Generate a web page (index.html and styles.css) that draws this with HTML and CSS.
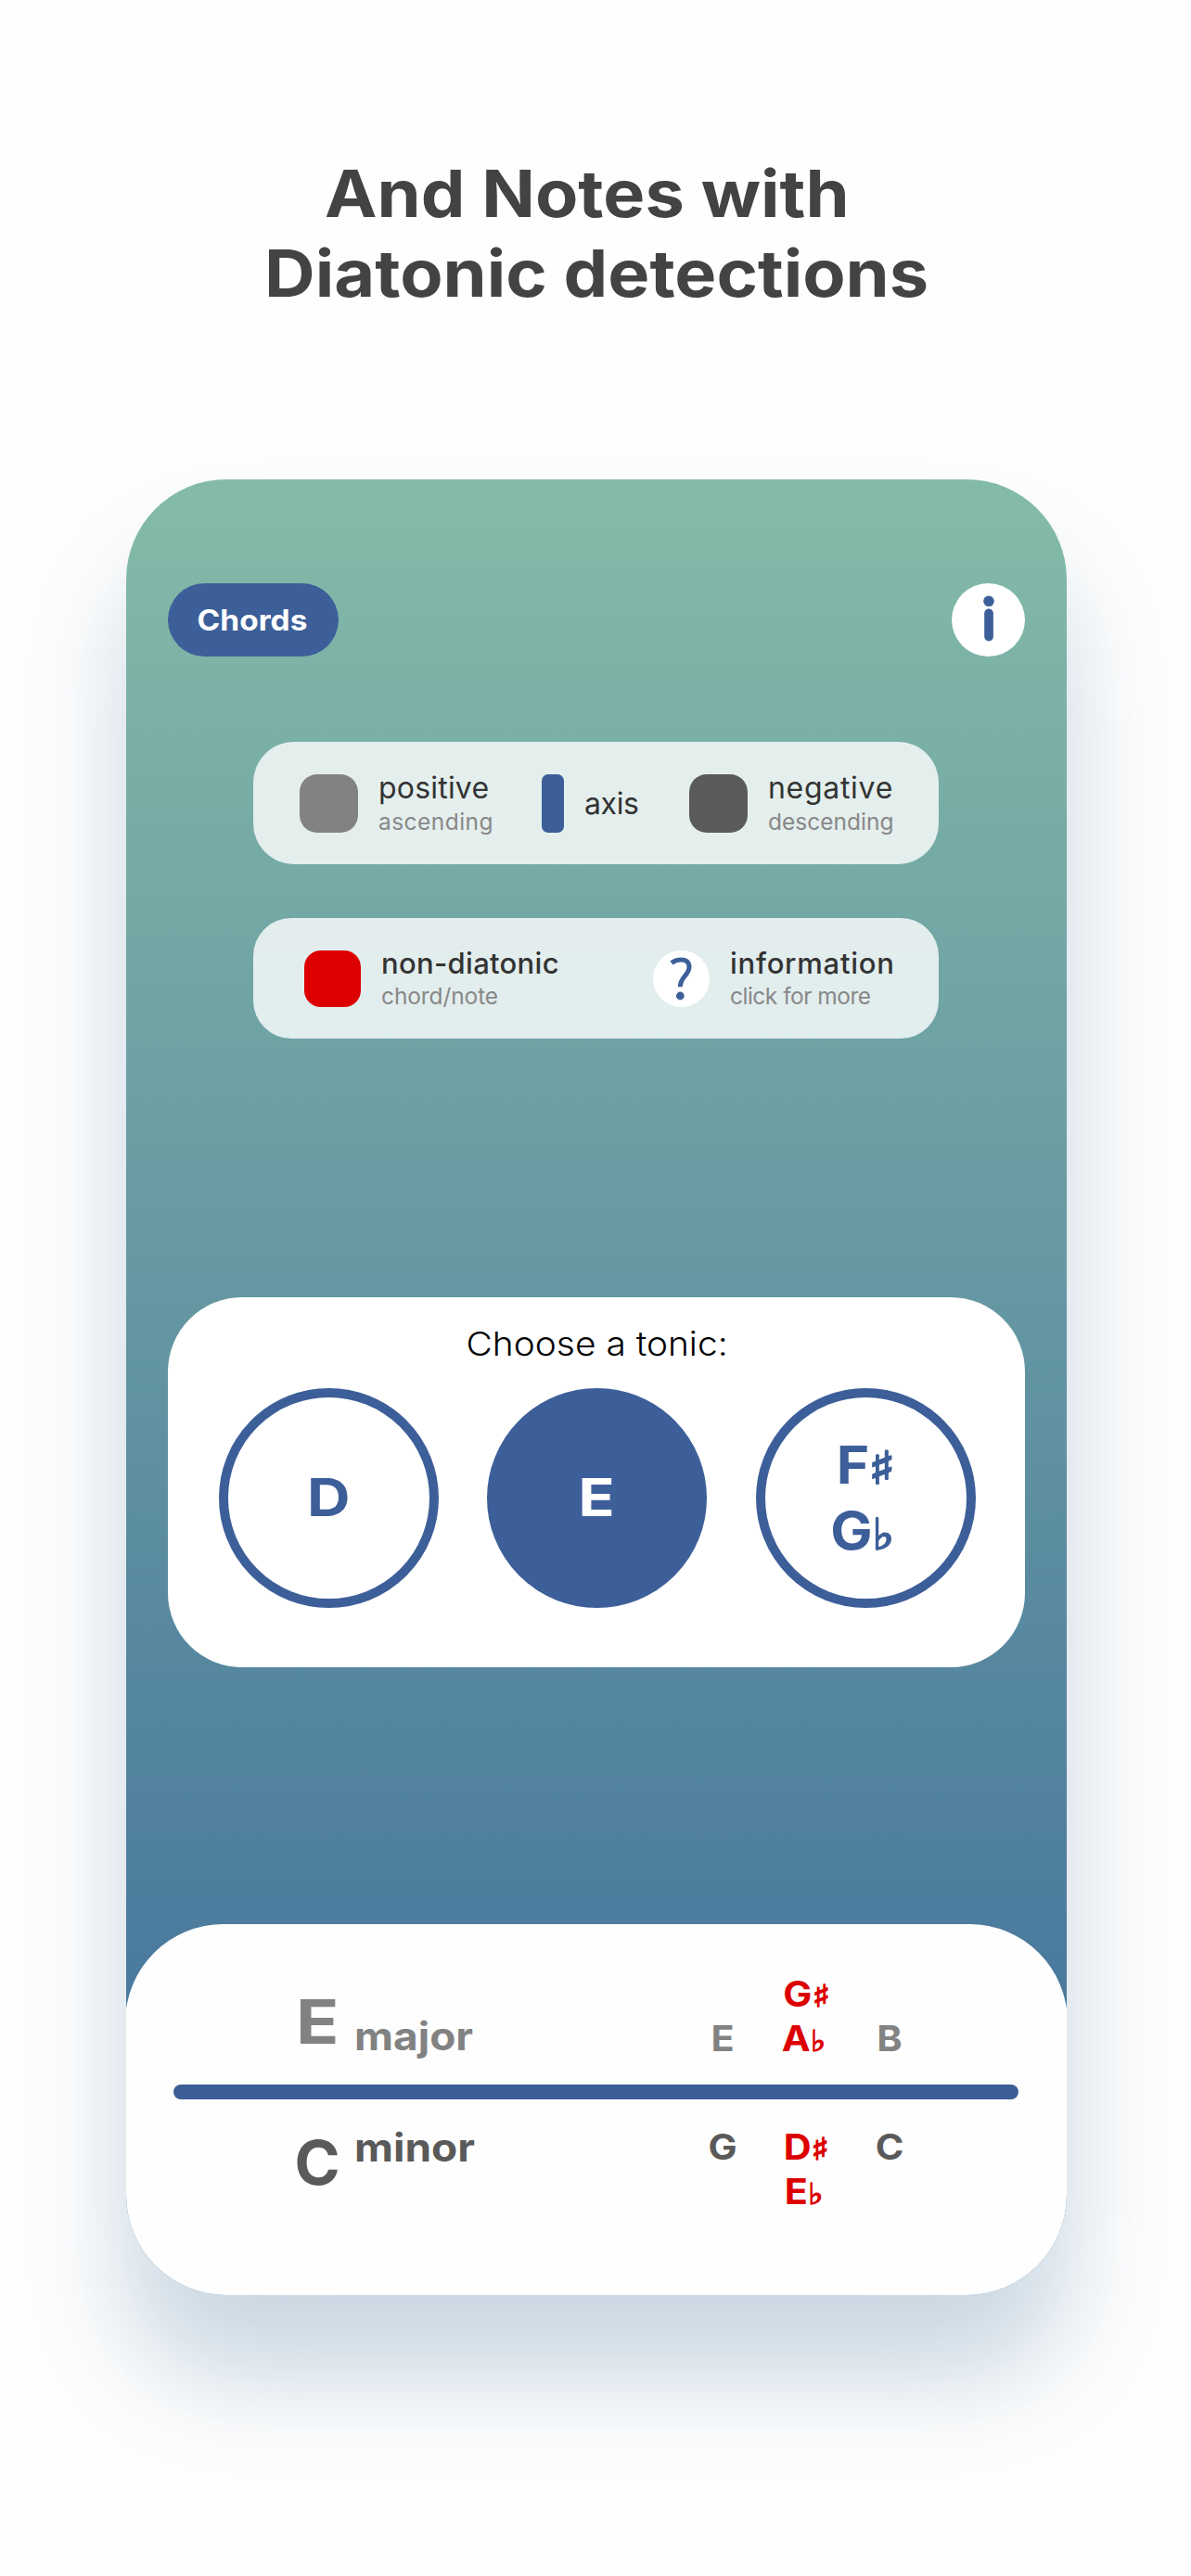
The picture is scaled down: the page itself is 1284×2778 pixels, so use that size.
FILE: index.html
```html
<!DOCTYPE html>
<html lang="en">
<head>
<meta charset="utf-8">
<title>Chords and notes</title>
<link rel="stylesheet" href="styles.css">
</head>
<body>
<h1 class="headline"><span class="line first">And Notes with</span><span class="line">Diatonic detections</span></h1>
<main class="phone">
  <header class="topbar">
    <button class="mode"><span class="wide">Chords</span></button>
    <button class="info" aria-label="Info">
      <svg viewBox="0 0 79 79" width="79" height="79"><circle cx="40" cy="19.3" r="5.8"/><rect x="35.2" y="27.5" width="9.7" height="35" rx="4.85"/></svg>
    </button>
  </header>

  <section class="legend legend-direction">
    <div class="item"><i class="swatch positive"></i><p><b class="t-positive">positive</b><small class="t-ascending">ascending</small></p></div>
    <div class="item"><i class="swatch axis"></i><p><b class="t-axis">axis</b></p></div>
    <div class="item"><i class="swatch negative"></i><p><b class="t-negative">negative</b><small>descending</small></p></div>
  </section>

  <section class="legend legend-status">
    <div class="item"><i class="swatch outside"></i><p><b class="t-outside">non-diatonic</b><small class="t-chord">chord/note</small></p></div>
    <div class="item">
      <svg class="help" viewBox="0 0 61 61" width="61" height="61"><circle class="disc" cx="30.5" cy="30.5" r="30.5"/><path d="M20 13.5C23 11 27 9.9 30.5 9.9C36 9.9 39 13 39 17.8C39 27 29.3 28 29.3 39.3"/><circle class="dot" cx="29.3" cy="49" r="4.4"/></svg>
      <p><b class="t-information">information</b><small class="t-click">click for more</small></p>
    </div>
  </section>

  <section class="tonic">
    <h2><span class="wide">Choose a tonic:</span></h2>
    <div class="choices">
      <button class="note"><span class="wider">D</span></button>
      <button class="note selected"><span class="wider">E</span></button>
      <button class="note"><span class="wide">F<i class="sharp">♯</i></span><span class="wide">G<i class="flat">♭</i></span></button>
    </div>
  </section>

  <section class="result">
    <div class="row major">
      <span class="key"><span class="wider">E</span></span><span class="quality">major</span>
      <div class="tones"><span class="tone">E</span><div class="off"><span class="tone">G<i class="sharp">♯</i></span><span class="tone">A<i class="flat">♭</i></span></div><span class="tone">B</span></div>
    </div>
    <div class="divider"></div>
    <div class="row minor">
      <span class="key">C</span><span class="quality">minor</span>
      <div class="tones"><span class="tone">G</span><div class="off"><span class="tone">D<i class="sharp">♯</i></span><span class="tone">E<i class="flat">♭</i></span></div><span class="tone">C</span></div>
    </div>
  </section>
</main>
</body>
</html>
```

FILE: styles.css
```css
* { box-sizing: border-box; margin: 0; padding: 0; }

body {
  width: 1284px;
  height: 2778px;
  overflow: hidden;
  background: #fefefe;
  font-family: Inter, "Liberation Sans", sans-serif;
}

button { border: 0; font: inherit; color: inherit; background: none; }
i { font-style: normal; }

.wide { display: inline-block; transform: scaleX(1.08); }
.wider { display: inline-block; transform: scaleX(1.15); }

.headline {
  padding-top: 166px;
  height: 517px;
  text-align: center;
  font-size: 70px;
  line-height: 86px;
  font-weight: 700;
  color: #434343;
}
.line { display: block; padding-left: 2px; transform: scaleX(1.081); }
.first { padding-right: 19px; }

.phone {
  width: 1014px;
  height: 1958px;
  margin-left: 135.5px;
  display: flex;
  flex-direction: column;
  align-items: center;
  border-radius: 108px;
  overflow: hidden;
  background: linear-gradient(#84bba8, #3e6c9b);
  box-shadow: 0 88px 114px rgba(71, 121, 159, .29);
}
.phone > * { flex: none; }

.topbar {
  width: 924px;
  margin-top: 112px;
  display: flex;
  justify-content: space-between;
}

.mode {
  width: 184px;
  height: 79px;
  border-radius: 40px;
  background: #3d5f99;
  color: #fff;
  font-size: 31px;
  font-weight: 700;
}

.info {
  width: 79px;
  height: 79px;
  border-radius: 50%;
  background: #fff;
  fill: #3d5f99;
}
.info svg { display: block; }

.legend {
  width: 739px;
  display: grid;
  align-items: center;
  background: rgba(255, 255, 255, .8);
}
.legend-direction {
  height: 132px;
  margin-top: 92px;
  padding-left: 50px;
  border-radius: 44px;
  grid-template-columns: 261px 159px auto;
}
.legend-status {
  height: 130px;
  margin-top: 58px;
  padding-left: 55px;
  border-radius: 41px;
  grid-template-columns: 376px auto;
}
.item { display: flex; align-items: center; gap: 22px; }
.item b { display: block; font-size: 32px; line-height: 36px; font-weight: 400; color: #333; white-space: nowrap; }
.item small { display: block; font-size: 24.5px; line-height: 36px; color: #888; white-space: nowrap; }
.legend-direction p { padding-top: 4px; }
.legend-status p { padding-top: 2px; }
.legend-status b { font-size: 31px; font-weight: 500; }
.legend-status small { line-height: 34px; }
.item .t-positive { letter-spacing: .2px; }
.item .t-ascending { letter-spacing: .45px; }
.item .t-axis { padding-bottom: 3px; letter-spacing: -.4px; }
.item .t-negative { letter-spacing: .7px; }
.item .t-outside { letter-spacing: .3px; }
.item .t-chord { letter-spacing: -.1px; }
.item .t-information { letter-spacing: .75px; }
.item .t-click { letter-spacing: -.5px; }

.swatch { width: 63px; height: 63px; border-radius: 19px; }
.positive { background: #828282; }
.negative { background: #5a5a5a; }
.axis { width: 24px; border-radius: 7px; background: #3d5f99; }
.outside { width: 61px; height: 61px; border-radius: 18px; background: #dc0000; }
.help .disc { fill: #fff; }
.help .dot { fill: #3d5f99; }
.help path { fill: none; stroke: #3d5f99; stroke-width: 5; }

.tonic {
  width: 924px;
  height: 399px;
  margin-top: 279px;
  padding: 25px 53px 0 55px;
  border-radius: 80px;
  background: #fff;
}
.tonic h2 { height: 73px; font-size: 36px; line-height: 50px; font-weight: 300; text-align: center; color: #000; }
.choices { display: flex; justify-content: space-between; }
.note {
  width: 237px;
  height: 237px;
  border: 10.5px solid #3d5f99;
  border-radius: 50%;
  display: flex;
  flex-direction: column;
  align-items: center;
  justify-content: center;
  color: #3d5f99;
  font-size: 56px;
  line-height: 71px;
  font-weight: 700;
}
.selected { background: #3d5f99; color: #fff; }

.sharp, .flat {
  font-family: "DejaVu Sans", sans-serif;
  font-weight: 400;
  font-size: .87em;
  line-height: 0;
  -webkit-text-stroke: .04em currentColor;
}
.sharp { display: inline-block; transform: scaleX(1.14); margin-left: .03em; }
.flat { font-size: .83em; margin-right: .15em; }

.result {
  width: 1016px;
  height: 400px;
  margin-top: 277px;
  border-radius: 106px 106px 0 0;
  background: #fefefe;
}
.row { height: 173px; padding-left: 177.5px; display: flex; font-weight: 700; }
.major { align-items: flex-end; color: #828282; }
.minor { align-items: flex-start; color: #5a5a5a; }
.key { width: 60px; font-size: 66.5px; line-height: 60px; text-align: center; }
.quality {
  width: 351.5px;
  margin-left: 10px;
  font-size: 42px;
  line-height: 48px;
  transform: scaleX(1.095);
  transform-origin: left;
}
.major .key { margin-bottom: 38px; }
.major .quality { margin-bottom: 28px; }
.minor .key { margin-top: 38px; }
.minor .quality { margin-top: 28px; }
.tones { display: grid; grid-template-columns: repeat(3, 90px); font-size: 38px; line-height: 48px; text-align: center; }
.tone { transform: scaleX(1.09); }
.major .tones { margin-bottom: 26px; align-items: end; }
.minor .tones { margin-top: 27px; align-items: start; }
.off { display: flex; flex-direction: column; color: #dc0000; }
.divider { width: 911px; height: 16px; margin: 0 auto; border-radius: 8px; background: #3d5f99; }
```
